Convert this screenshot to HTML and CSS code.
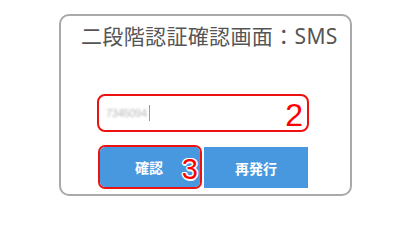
FILE: index.html
```html
<!DOCTYPE html>
<html lang="ja">
<head>
<meta charset="utf-8">
<title>二段階認証確認画面：SMS</title>
<link rel="stylesheet" href="styles.css">
</head>
<body>
<div class="card">
  <div class="title">二段階認証確認画面：SMS</div>
  <div class="field-row">
    <div class="field">
      <span class="code">7345094</span><span class="caret"></span>
      <span class="step step-2">2</span>
    </div>
  </div>
  <div class="button-row">
    <div class="mark">
      <button class="btn btn-confirm" type="button">確認</button>
      <span class="step step-3">3</span>
    </div>
    <button class="btn btn-resend" type="button">再発行</button>
  </div>
</div>
</body>
</html>
```

FILE: styles.css
```css
html, body {
  margin: 0;
  padding: 0;
  background: #ffffff;
}

body {
  font-family: "Noto Sans", "Noto Sans CJK JP", sans-serif;
}

.card {
  box-sizing: border-box;
  width: 293px;
  height: 182px;
  margin: 14px 0 0 59px;
  border: 2px solid #a9a9a9;
  border-radius: 10px;
}

.title {
  padding: 7px 0 0 20px;
  font-size: 21px;
  line-height: 26px;
  letter-spacing: 0.35px;
  color: #555555;
  white-space: nowrap;
}

.field-row {
  margin-top: 45px;
  padding-left: 36px;
}

.field {
  position: relative;
  box-sizing: border-box;
  display: flex;
  align-items: center;
  width: 212px;
  height: 38px;
  padding-left: 7px;
  border: 2px solid #ee1111;
  border-radius: 8px;
}

.code {
  font-family: "Liberation Sans", sans-serif;
  font-size: 11px;
  color: #b8b8b8;
  letter-spacing: -0.3px;
  filter: blur(0.9px);
}

.caret {
  width: 1px;
  height: 16px;
  margin-left: 2px;
  background: #9a9a9a;
  filter: blur(0.4px);
}

.step {
  position: absolute;
  font-family: "Liberation Sans", Arial, sans-serif;
  color: #ff0000;
  line-height: 1;
}

.step-2 {
  right: 4px;
  top: 3px;
  font-size: 32px;
}

.button-row {
  display: flex;
  align-items: flex-start;
  margin-top: 13px;
  padding-left: 37px;
}

.mark {
  position: relative;
  display: flex;
  box-sizing: border-box;
  width: 104px;
  height: 44px;
  border: 2px solid #ee1111;
  border-radius: 7px;
  overflow: hidden;
}

.btn {
  border: none;
  margin: 0;
  padding: 0;
  background: #4898df;
  color: #ffffff;
  font-family: "Noto Sans CJK JP", sans-serif;
  font-size: 14px;
  font-weight: 700;
  cursor: pointer;
}

.btn-confirm {
  width: 100%;
  height: 100%;
  padding-right: 2px;
}

.btn-resend {
  width: 104px;
  height: 41px;
  margin: 2px 0 0 2px;
}

.step-3 {
  right: 2px;
  top: 8px;
  font-size: 29px;
  text-shadow:
    -1.5px 0 0 #fff, 1.5px 0 0 #fff, 0 -1.5px 0 #fff, 0 1.5px 0 #fff,
    -1px -1px 0 #fff, 1px -1px 0 #fff, -1px 1px 0 #fff, 1px 1px 0 #fff;
}
```
